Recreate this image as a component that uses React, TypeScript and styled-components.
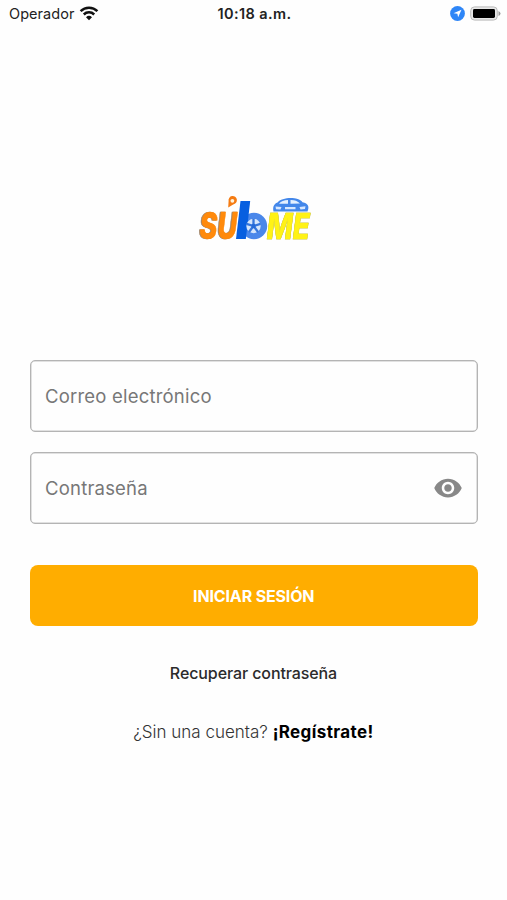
import React from 'react';
import styled, { createGlobalStyle } from 'styled-components';

const GlobalStyle = createGlobalStyle`
  * { box-sizing: border-box; }
  body { margin: 0; background: #fefefe; font-family: Inter, "Liberation Sans", sans-serif; }
`;

const Screen = styled.main`
  width: 100%;
  height: 900px;
  display: flex;
  flex-direction: column;
`;

const StatusBar = styled.header`
  height: 27px;
  display: grid;
  grid-template-columns: 1fr auto 1fr;
  align-items: center;
  padding: 0 6px 0 9px;
  color: #222;
  font-size: 14.5px;
`;

const StatusGroup = styled.div<{ $end?: boolean }>`
  display: flex;
  align-items: center;
  gap: 5px;
  justify-content: ${(p) => (p.$end ? 'flex-end' : 'flex-start')};
`;

const Carrier = styled.span`
  letter-spacing: 0.05px;
`;

const Clock = styled.time`
  font-weight: 600;
  font-size: 14.5px;
  letter-spacing: 0.38px;
  margin-right: 1px;
`;

const LogoArea = styled.div`
  height: 333px;
  display: flex;
  align-items: flex-start;
  justify-content: center;
  padding: 158px 0 0 3px;
`;

const LogoSvg = styled.svg`
  overflow: visible;
`;

const Form = styled.form`
  display: flex;
  flex-direction: column;
  padding: 0 29.5px 0 30px;
`;

const Field = styled.label`
  height: 72px;
  margin-bottom: 19.5px;
  display: flex;
  align-items: center;
  justify-content: space-between;
  padding: 0 14px;
  border: 1px solid #b4b4b4;
  box-shadow: inset 0 0 0 0.5px #c4c4c4;
  border-radius: 5px;
`;

const Input = styled.input`
  flex: 1;
  min-width: 0;
  padding: 0;
  border: 0;
  outline: 0;
  background: transparent;
  font: 400 18.5px Inter, sans-serif;
  letter-spacing: 0.2px;
  color: #333;
  &::placeholder { color: #777; opacity: 1; }
`;

const IconButton = styled.button`
  display: flex;
  padding: 0;
  border: 0;
  background: none;
`;

const Submit = styled.button`
  height: 61px;
  margin-top: 22px;
  border: 0;
  border-radius: 8px;
  background: #ffad00;
  color: #fff;
  font: 700 16px Inter, sans-serif;
  letter-spacing: -0.15px;
`;

const Links = styled.nav`
  display: flex;
  flex-direction: column;
  align-items: center;
  padding-top: 36px;
  gap: 36.5px;
`;

const Recover = styled.a`
  font-size: 16px;
  line-height: 22px;
  font-weight: 500;
  letter-spacing: -0.1px;
  color: #2b2b2b;
`;

const SignUp = styled.p`
  margin: 0;
  font-size: 17px;
  line-height: 22px;
  font-weight: 300;
  color: #333;
`;

const Strong = styled.a`
  font-weight: 700;
  letter-spacing: 0.38px;
  color: #000;
`;

const WifiIcon = () => (
  <svg width="20" height="15" viewBox="0 0 20 15" fill="none" stroke="#111" strokeWidth="2.5">
    <path d="M1.6 5.2a12 12 0 0 1 16.8 0" />
    <path d="M4.8 8.5a7.4 7.4 0 0 1 10.4 0" />
    <path d="M10 14.2 7 11.2a4.3 4.3 0 0 1 6 0z" fill="#111" stroke="none" />
  </svg>
);

const LocationIcon = () => (
  <svg width="15" height="15" viewBox="0 0 15 15">
    <circle cx="7.5" cy="7.5" r="7.4" fill="#2e86f7" />
    <path d="M11.5 3.7 8.1 11.3 7.4 7.8 3.5 7.2z" fill="#fff" />
  </svg>
);

const BatteryIcon = () => (
  <svg width="31" height="15" viewBox="0 0 31 15">
    <rect x=".7" y=".9" width="26.6" height="13.2" rx="3.8" fill="#e8e8e8" stroke="#bbb" strokeWidth="1" />
    <rect x="3" y="3" width="22" height="9" rx="1.4" fill="#000" />
    <path d="M28.5 5v5q2-1 2-2.5t-2-2.5z" fill="#999" />
  </svg>
);

const EyeIcon = () => (
  <svg width="30" height="30" viewBox="0 0 24 24" fill="#888">
    <path d="M12 4.5C7 4.5 2.73 7.61 1 12c1.73 4.39 6 7.5 11 7.5s9.27-3.11 11-7.5c-1.73-4.39-6-7.5-11-7.5zM12 17c-2.76 0-5-2.24-5-5s2.24-5 5-5 5 2.24 5 5-2.24 5-5 5zm0-8c-1.66 0-3 1.34-3 3s1.34 3 3 3 3-1.34 3-3-1.34-3-3-3z" />
  </svg>
);

const LogoText = styled.text`
  font-family: Inter, sans-serif;
  font-weight: 800;
  font-style: italic;
`;

const OrangeText = styled(LogoText)`
  fill: #ff8a0c;
  stroke: #ff8a0c;
  stroke-width: 0.6px;
  filter: drop-shadow(-0.7px 0.6px 0 #a08468);
`;

const YellowText = styled(LogoText)`
  fill: #fff216;
  stroke: #fff216;
  stroke-width: 0.5px;
  filter: drop-shadow(0.8px 0.6px 0 #8d8f78);
`;

const Logo = () => (
  <LogoSvg width="130" height="70" viewBox="0 -5 130 70" role="img" aria-label="SúbME">
    <OrangeText x="9.6" y="48.7" fontSize="37.5" textLength="37.5" lengthAdjust="spacingAndGlyphs">SU</OrangeText>
    <path d="M38.2 17.6 38.6 11.1a4.2 4.2 0 1 1 4.6 3.3z" fill="#f57b12" />
    <circle cx="42.4" cy="10.8" r="1.9" fill="#fff2dc" />
    <circle cx="64" cy="36" r="13.2" fill="#4a87ea" />
    <path d="M50.5 11h9.7l-4.4 38H46z" fill="#075fe0" />
    <circle cx="63.5" cy="36" r="7.2" fill="#d5e6fc" />
    <path d="M63.5 36V28.5M63.5 36l7-2.2M63.5 36l4.5 6M63.5 36 59 42M63.5 36l-7-2.2" stroke="#3476dc" strokeWidth="2.3" />
    <circle cx="63.5" cy="36" r="2.2" fill="#246ad8" />
    <path d="M83.5 21.5c-1-5 .5-7.500 4-9 4-5 20-6.500 25-.3 6 1.300 7 4.300 5 9.300z" fill="#4387ea" />
    <path d="M89 13.800c2-2.800 5-3.800 9-3.900v3.900zM100.500 9.900c4-.1 7 1 9.500 3.600l-9.500.3z" fill="#e4f0ff" />
    <path d="M85.500 16.500l6 .6-1 2.500-4.500-.4zM115.500 16.300l-6 .8 1 2.500 4.500-.6zM95 17h10.500v2.300H95z" fill="#d7e8ff" />
    <YellowText x="76.800" y="48.700" fontSize="36" textLength="43" lengthAdjust="spacingAndGlyphs">ME</YellowText>
  </LogoSvg>
);

export default function App() {
  return (
    <Screen>
      <GlobalStyle />
      <StatusBar>
        <StatusGroup><Carrier>Operador</Carrier><WifiIcon /></StatusGroup>
        <Clock>10:18 a.m.</Clock>
        <StatusGroup $end><LocationIcon /><BatteryIcon /></StatusGroup>
      </StatusBar>
      <LogoArea><Logo /></LogoArea>
      <Form onSubmit={(e) => e.preventDefault()}>
        <Field><Input type="email" placeholder="Correo electrónico" /></Field>
        <Field>
          <Input type="password" placeholder="Contraseña" />
          <IconButton type="button" aria-label="Mostrar contraseña"><EyeIcon /></IconButton>
        </Field>
        <Submit type="submit">INICIAR SESIÓN</Submit>
      </Form>
      <Links>
        <Recover>Recuperar contraseña</Recover>
        <SignUp>¿Sin una cuenta? <Strong>¡Regístrate!</Strong></SignUp>
      </Links>
    </Screen>
  );
}
